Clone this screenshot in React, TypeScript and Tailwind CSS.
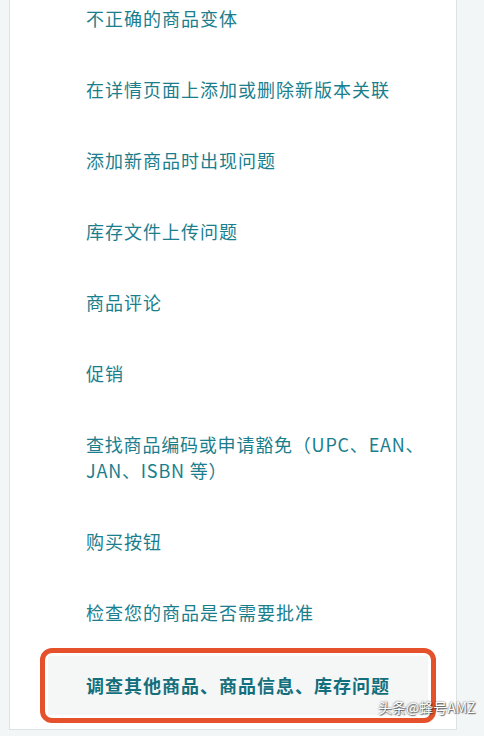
const items = [
  "不正确的商品变体",
  "在详情页面上添加或删除新版本关联",
  "添加新商品时出现问题",
  "库存文件上传问题",
  "商品评论",
  "促销",
  "查找商品编码或申请豁免（UPC、EAN、JAN、ISBN 等）",
  "购买按钮",
  "检查您的商品是否需要批准",
];

export default function App() {
  return (
    <div
      className="relative flex h-[736px] w-[484px] overflow-hidden bg-[#f3f6f6]"
      style={{ fontFamily: '"Noto Sans CJK SC", "Noto Sans", sans-serif' }}
    >
      <div className="w-[9px] shrink-0" />
      <div className="mb-[6px] flex w-[448px] shrink-0 flex-col border-x border-b border-[#dde2e2] bg-white">
        <ul className="-mt-[17px] flex flex-col">
          {items.map((t) => {
            const long = t.length > 20;
            return (
              <li
                key={t}
                className={
                  long
                    ? "pt-[22px] pb-[23px] pl-[76px] pr-[8px] text-[18px] leading-[26px] tracking-[0.8px] text-[#1a7e8d]"
                    : "py-[22px] pl-[76px] pr-[20px] text-[18px] leading-[27px] tracking-[1px] text-[#1a7e8d]"
                }
              >
                {t}
              </li>
            );
          })}
          <li className="ml-[30px] mr-[20px] rounded-[12px] border-[5px] border-[#e5512b] p-[3px]">
            <div className="bg-[#f5f7f7] py-[16px] pl-[38px] text-[18px] font-bold leading-[27px] tracking-[1px] text-[#146f7c]">
              调查其他商品、商品信息、库存问题
            </div>
          </li>
        </ul>
      </div>
      <div className="flex-1" />
      <div
        className="absolute bottom-[22px] left-[378px] text-[14px] leading-none text-white"
        style={{ textShadow: "0 0 2px rgba(0,0,0,0.7), 1px 1px 1px rgba(0,0,0,0.5)" }}
      >
        头条@蜂号AMZ
      </div>
    </div>
  );
}
